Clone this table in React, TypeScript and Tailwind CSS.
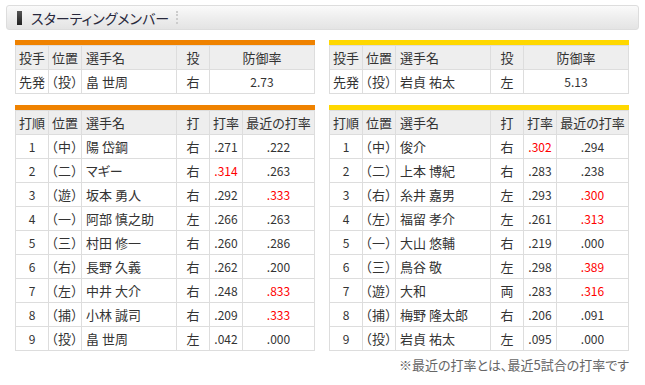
import React from 'react';

type Batter = { order: number; pos: string; name: string; hand: string; avg: string; recent: string; avgHot?: boolean; recentHot?: boolean; visited?: boolean };

const homePitcher = { role: '先発', pos: '（投）', name: '畠 世周', hand: '右', era: '2.73' };
const awayPitcher = { role: '先発', pos: '（投）', name: '岩貞 祐太', hand: '左', era: '5.13' };

const homeBatters: Batter[] = [
  { order: 1, pos: '（中）', name: '陽 岱鋼', hand: '右', avg: '.271', recent: '.222' },
  { order: 2, pos: '（二）', name: 'マギー', hand: '右', avg: '.314', recent: '.263', avgHot: true },
  { order: 3, pos: '（遊）', name: '坂本 勇人', hand: '右', avg: '.292', recent: '.333', recentHot: true },
  { order: 4, pos: '（一）', name: '阿部 慎之助', hand: '左', avg: '.266', recent: '.263' },
  { order: 5, pos: '（三）', name: '村田 修一', hand: '右', avg: '.260', recent: '.286' },
  { order: 6, pos: '（右）', name: '長野 久義', hand: '右', avg: '.262', recent: '.200' },
  { order: 7, pos: '（左）', name: '中井 大介', hand: '右', avg: '.248', recent: '.833', recentHot: true },
  { order: 8, pos: '（捕）', name: '小林 誠司', hand: '右', avg: '.209', recent: '.333', recentHot: true },
  { order: 9, pos: '（投）', name: '畠 世周', hand: '左', avg: '.042', recent: '.000' },
];

const awayBatters: Batter[] = [
  { order: 1, pos: '（中）', name: '俊介', hand: '右', avg: '.302', recent: '.294', avgHot: true },
  { order: 2, pos: '（二）', name: '上本 博紀', hand: '右', avg: '.283', recent: '.238' },
  { order: 3, pos: '（右）', name: '糸井 嘉男', hand: '左', avg: '.293', recent: '.300', recentHot: true },
  { order: 4, pos: '（左）', name: '福留 孝介', hand: '左', avg: '.261', recent: '.313', recentHot: true },
  { order: 5, pos: '（一）', name: '大山 悠輔', hand: '右', avg: '.219', recent: '.000' },
  { order: 6, pos: '（三）', name: '鳥谷 敬', hand: '左', avg: '.298', recent: '.389', recentHot: true, visited: true },
  { order: 7, pos: '（遊）', name: '大和', hand: '両', avg: '.283', recent: '.316', recentHot: true },
  { order: 8, pos: '（捕）', name: '梅野 隆太郎', hand: '右', avg: '.206', recent: '.091' },
  { order: 9, pos: '（投）', name: '岩貞 祐太', hand: '左', avg: '.095', recent: '.000' },
];

const th = 'h-[24px] border border-[#dddddd] bg-[#eeeeee] font-normal text-[#333] p-0 whitespace-nowrap';
const td = 'h-[24px] border border-[#dddddd] bg-white text-[#333] p-0 whitespace-nowrap';

function PitcherTable({ bar, p }: { bar: string; p: typeof homePitcher }) {
  return (
    <div className="w-[300px]">
      <div className={`h-[5px] ${bar}`} />
      <table className="w-[300px] border-collapse table-fixed">
        <colgroup>
          <col className="w-[33px]" />
          <col className="w-[33px]" />
          <col className="w-[95px]" />
          <col className="w-[33px]" />
          <col />
        </colgroup>
        <thead>
          <tr>
            <th className={`${th} text-left pl-[3px]`}>投手</th>
            <th className={`${th} text-left pl-[3px]`}>位置</th>
            <th className={`${th} text-left pl-[4px]`}>選手名</th>
            <th className={`${th} text-center`}>投</th>
            <th className={`${th} text-center`}>防御率</th>
          </tr>
        </thead>
        <tbody>
          <tr>
            <td className={`${td} pl-[3px]`}>{p.role}</td>
            <td className={`${td} pl-[2px] tracking-[0.5px]`}>{p.pos}</td>
            <td className={`${td} pl-[4px] text-[#0b64a8]`}>{p.name}</td>
            <td className={`${td} text-center`}>{p.hand}</td>
            <td className={`${td} text-center text-[12px]`}>{p.era}</td>
          </tr>
        </tbody>
      </table>
    </div>
  );
}

function BatterTable({ bar, rows }: { bar: string; rows: Batter[] }) {
  return (
    <div className="w-[300px]">
      <div className={`h-[5px] ${bar}`} />
      <table className="w-[300px] border-collapse table-fixed">
        <colgroup>
          <col className="w-[33px]" />
          <col className="w-[33px]" />
          <col className="w-[95px]" />
          <col className="w-[33px]" />
          <col className="w-[33px]" />
          <col />
        </colgroup>
        <thead>
          <tr>
            <th className={`${th} text-left pl-[3px]`}>打順</th>
            <th className={`${th} text-left pl-[3px]`}>位置</th>
            <th className={`${th} text-left pl-[4px]`}>選手名</th>
            <th className={`${th} text-center`}>打</th>
            <th className={`${th} text-center`}>打率</th>
            <th className={`${th} text-center`}>最近の打率</th>
          </tr>
        </thead>
        <tbody>
          {rows.map((b) => (
            <tr key={b.order}>
              <td className={`${td} text-center text-[12px]`}>{b.order}</td>
              <td className={`${td} pl-[2px] tracking-[0.5px]`}>{b.pos}</td>
              <td className={`${td} pl-[4px] ${b.visited ? 'text-[#5b2a96]' : 'text-[#0b64a8]'}`}>{b.name}</td>
              <td className={`${td} text-center`}>{b.hand}</td>
              <td className={`${td} text-center text-[12px] ${b.avgHot ? 'text-[#ff0000]' : ''}`}>{b.avg}</td>
              <td className={`${td} text-center text-[12px] ${b.recentHot ? 'text-[#ff0000]' : ''}`}>{b.recent}</td>
            </tr>
          ))}
        </tbody>
      </table>
    </div>
  );
}

export default function App() {
  return (
    <div className="w-[645px] h-[385px] bg-white pt-[5px] text-[13px] leading-none font-['Noto_Sans_CJK_JP','Noto_Sans',sans-serif] [font-feature-settings:'palt']">
      <div className="mx-[6px] h-[25px] flex items-center rounded-[3px] border border-[#dddddd] bg-gradient-to-b from-[#fafafa] via-[#eeeeee] to-[#e4e4e4]">
        <div className="ml-[10px] w-[5px] h-[14px] bg-gradient-to-b from-[#555] to-[#222]" />
        <span className="ml-[9px] text-[14px] text-[#28283c]">スターティングメンバー</span>
        <span className="ml-[7px] h-[13px] border-l-2 border-dotted border-[#cccccc]" />
      </div>

      <div className="mt-[10px] pl-[15px] flex gap-[14px]">
        <PitcherTable bar="bg-[#ef8200]" p={homePitcher} />
        <PitcherTable bar="bg-[#ffd800]" p={awayPitcher} />
      </div>

      <div className="mt-[11px] pl-[15px] flex gap-[14px]">
        <BatterTable bar="bg-[#ef8200]" rows={homeBatters} />
        <BatterTable bar="bg-[#ffd800]" rows={awayBatters} />
      </div>

      <div className="w-[629px] mt-[7px] text-right text-[13px] text-[#666]">
        ※最近の打率とは、最近5試合の打率です
      </div>
    </div>
  );
}
